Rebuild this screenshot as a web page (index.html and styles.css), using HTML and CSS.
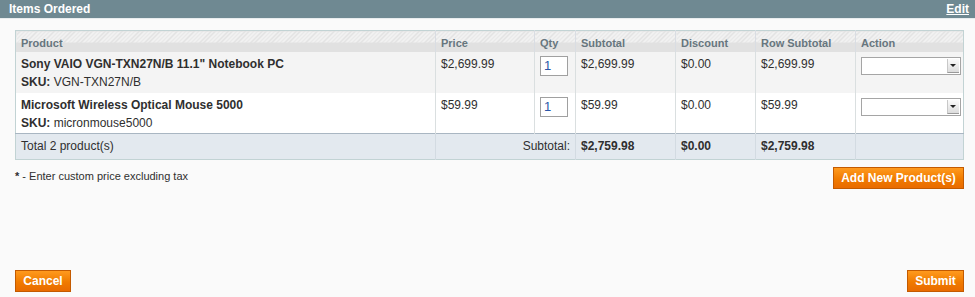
FILE: index.html
```html
<!DOCTYPE html>
<html>
<head>
<meta charset="utf-8">
<link rel="stylesheet" href="styles.css">
</head>
<body>
<div class="head">
  <h2 class="title">Items Ordered</h2>
  <a class="edit" href="#">Edit</a>
</div>
<div class="content">
  <table class="grid">
    <colgroup>
      <col class="c-prod"><col class="c-price"><col class="c-qty"><col class="c-sub"><col class="c-disc"><col class="c-row"><col class="c-act">
    </colgroup>
    <thead>
      <tr><th>Product</th><th>Price</th><th>Qty</th><th>Subtotal</th><th>Discount</th><th>Row Subtotal</th><th>Action</th></tr>
    </thead>
    <tbody>
      <tr class="odd">
        <td><div class="name">Sony VAIO VGN-TXN27N/B 11.1" Notebook PC</div><div class="sku"><b>SKU:</b> VGN-TXN27N/B</div></td>
        <td>$2,699.99</td>
        <td><input class="qty" type="text" value="1"></td>
        <td>$2,699.99</td>
        <td>$0.00</td>
        <td>$2,699.99</td>
        <td><div class="sel"><span class="arrow"></span></div></td>
      </tr>
      <tr class="even">
        <td><div class="name">Microsoft Wireless Optical Mouse 5000</div><div class="sku"><b>SKU:</b> micronmouse5000</div></td>
        <td>$59.99</td>
        <td><input class="qty" type="text" value="1"></td>
        <td>$59.99</td>
        <td>$0.00</td>
        <td>$59.99</td>
        <td><div class="sel"><span class="arrow"></span></div></td>
      </tr>
    </tbody>
    <tfoot>
      <tr>
        <td>Total 2 product(s)</td>
        <td colspan="2" class="right">Subtotal:</td>
        <td><b>$2,759.98</b></td>
        <td><b>$0.00</b></td>
        <td><b>$2,759.98</b></td>
        <td></td>
      </tr>
    </tfoot>
  </table>
  <div class="below">
    <p class="note"><b>*</b> - Enter custom price excluding tax</p>
    <button class="btn">Add New Product(s)</button>
  </div>
  <div class="actions">
    <button class="btn">Cancel</button>
    <button class="btn">Submit</button>
  </div>
</div>
</body>
</html>
```
FILE: styles.css
```css
html, body { margin: 0; padding: 0; }
body {
  background: #fafafa;
  font-family: "Liberation Sans", Arial, sans-serif;
  font-size: 12px;
  color: #2f2f2f;
  width: 975px;
  height: 297px;
  overflow: hidden;
}
.head {
  background: #6f8992;
  height: 18px;
  border-bottom: 1px solid #e8ecee;
  display: flex;
  justify-content: space-between;
  align-items: center;
  padding: 0 6px 0 9px;
}
.title {
  margin: 0;
  font-size: 12px;
  font-weight: bold;
  color: #fff;
}
.edit {
  color: #fff;
  font-weight: bold;
  font-size: 12px;
  text-decoration: underline;
}
.content {
  padding: 11px 11px 0 15px;
}
.grid {
  width: 948px;
  border-collapse: collapse;
  border: 1px solid #c2d3d4;
  table-layout: fixed;
}
.c-prod { width: 420px; }
.c-price { width: 99px; }
.c-qty { width: 41px; }
.c-sub { width: 100px; }
.c-disc { width: 80px; }
.c-row { width: 100px; }
.c-act { width: 108px; }
.grid th {
  height: 21px;
  padding: 0 5px;
  text-align: left;
  font-size: 11px;
  font-weight: bold;
  color: #67767e;
  border-left: 1px solid #d9dde3;
  vertical-align: bottom;
  padding-bottom: 3px;
  box-sizing: border-box;
  background:
    linear-gradient(to bottom, transparent 0, transparent 11px, #e1e1e1 11px, #e1e1e1 100%),
    repeating-linear-gradient(135deg, #f2f2f2 0, #f2f2f2 2px, #e0e0e0 2px, #e0e0e0 3px);
}
.grid td {
  padding: 3px 5px 0 5px;
  vertical-align: top;
  border-left: 1px solid #dadfe0;
  line-height: 18px;
}
.grid th:first-child, .grid td:first-child { border-left: 0; padding-left: 5px; }
.odd td { background: #f4f4f4; height: 38px; }
.even td { background: #fff; height: 37px; }
.name { font-weight: bold; }
.grid tfoot td {
  background: #e3e9ef;
  border-top: 1px solid #a9b6c2;
  height: 22px;
  padding-top: 3px;
  border-left: 1px solid #d3dbe2;
}
.grid tfoot td.right { text-align: right; padding-right: 5px; }
.qty {
  width: 28px;
  height: 20px;
  box-sizing: border-box;
  border: 1px solid #a0a0a0;
  padding: 0 3px;
  font-family: "Liberation Sans", Arial, sans-serif;
  font-size: 13px;
  color: #2a56a8;
  margin: 1px 0 0 0;
  display: block;
  background: #fff;
}
.sel {
  position: relative;
  width: 100px;
  height: 18px;
  box-sizing: border-box;
  border: 1px solid #a5a5a5;
  background: #fff;
  margin-top: 2px;
}
.arrow {
  position: absolute;
  right: 1px;
  top: 1px;
  width: 12px;
  height: 14px;
  background: linear-gradient(#fbfbfb, #dcdcdc);
  border-left: 1px solid #c8c8c8;
  border-bottom: 1px solid #9a9a9a;
  box-sizing: border-box;
}
.arrow::after {
  content: "";
  position: absolute;
  left: 2px;
  top: 5px;
  border-left: 3px solid transparent;
  border-right: 3px solid transparent;
  border-top: 3px solid #222;
}
.below {
  display: flex;
  justify-content: space-between;
  align-items: flex-start;
  margin-top: 7px;
}
.note {
  margin: 3px 0 0 0;
  font-size: 11px;
  color: #2f2f2f;
}
.btn {
  height: 22px;
  box-sizing: border-box;
  border: 1px solid #c35a00;
  background: linear-gradient(#ff9a1e, #f07b00 55%, #e96b00);
  color: #fff;
  font-family: "Liberation Sans", Arial, sans-serif;
  font-size: 12px;
  font-weight: bold;
  padding: 0;
  cursor: pointer;
}
.below .btn { width: 131px; }
.actions {
  display: flex;
  justify-content: space-between;
  margin-top: 81px;
}
.actions .btn { width: 56px; }
.actions .btn:last-child { width: 57px; }
```
